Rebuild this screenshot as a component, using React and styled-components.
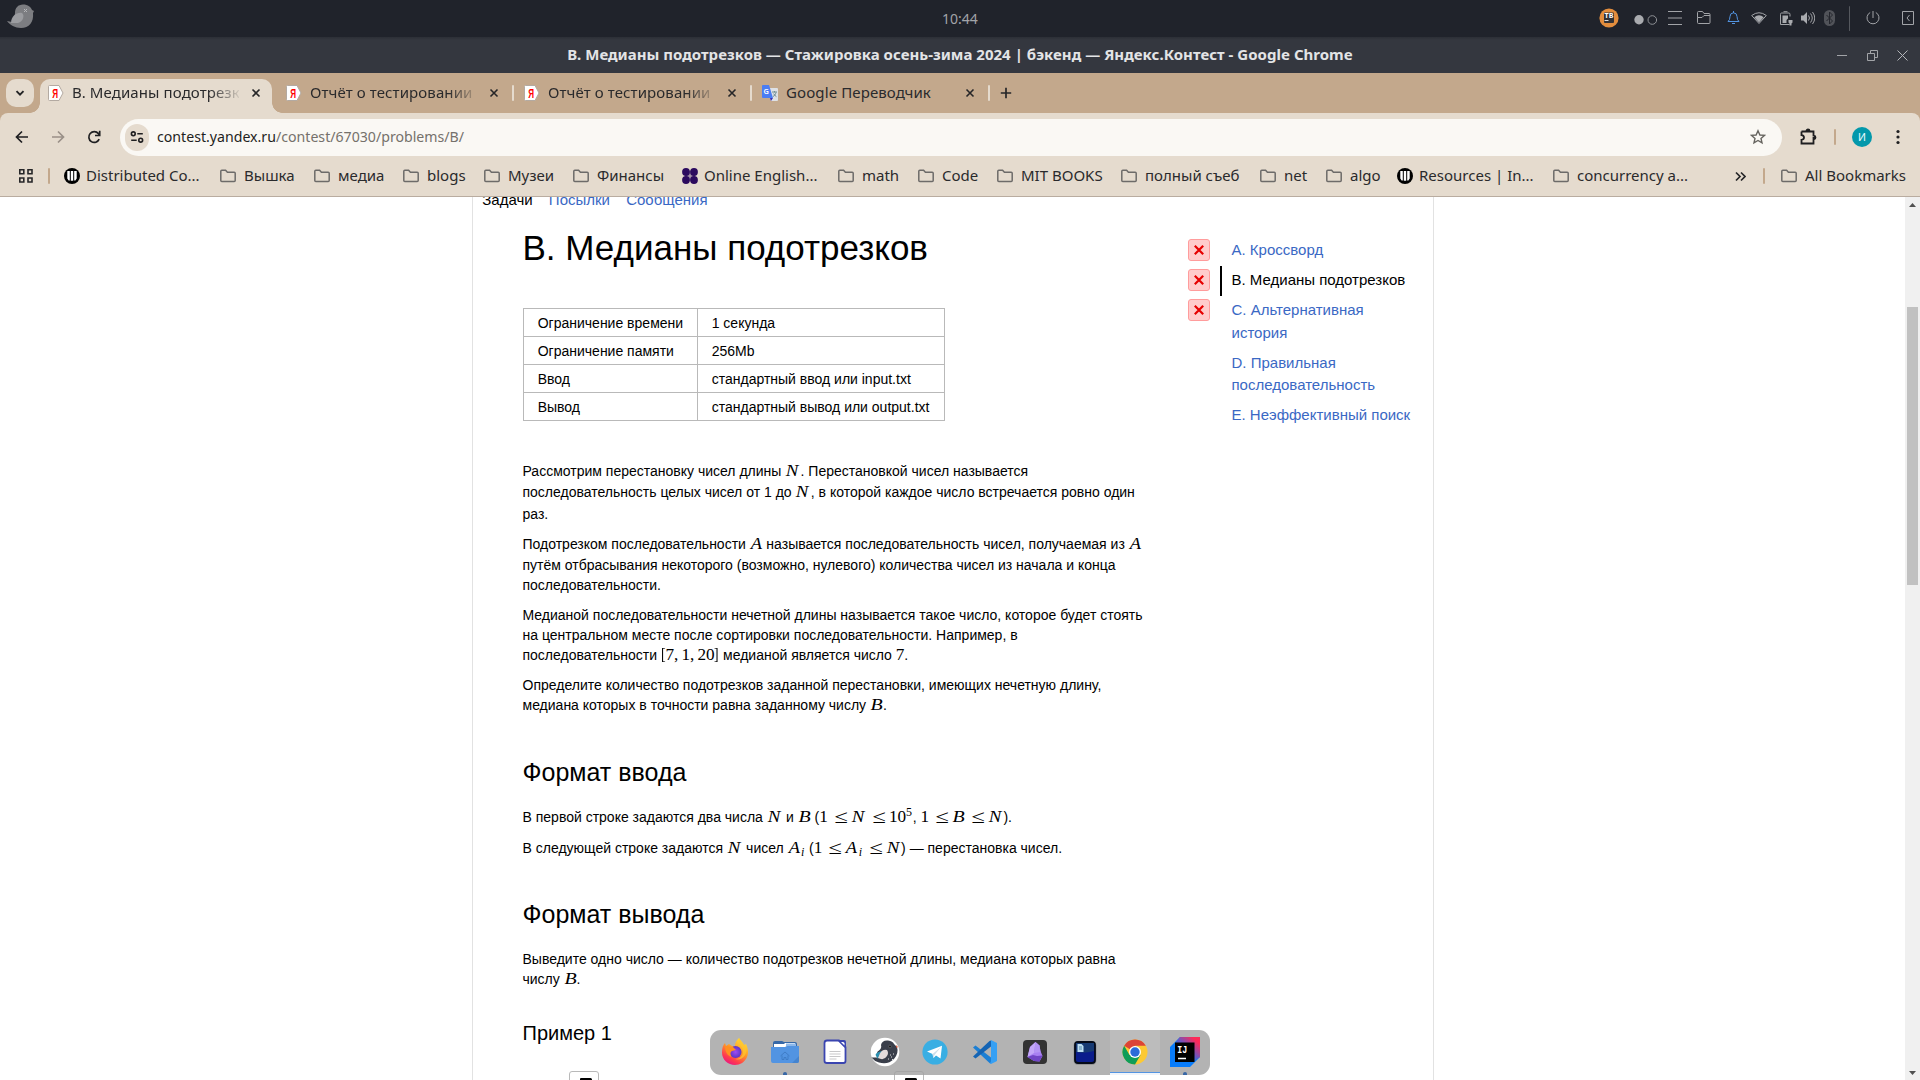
import React from 'react';
import styled, { createGlobalStyle } from 'styled-components';

const GlobalStyle = createGlobalStyle`
  * { box-sizing: border-box; }
  body { margin: 0; background: #fff; overflow: hidden; }
`;

const ui = `"Noto Sans", "Open Sans", sans-serif`;
const web = `"Liberation Sans", Arial, sans-serif`;
const serif = `"Liberation Serif", "Times New Roman", serif`;

const Desktop = styled.div`
  width: 1920px;
  height: 1080px;
  display: flex;
  flex-direction: column;
  overflow: hidden;
  position: relative;
  font-family: ${ui};
  font-size: 15px;
  color: #2a2a2c;
  svg { display: block; flex: none; }
`;

/* ---------- system panel ---------- */
const Panel = styled.header`
  height: 37px;
  flex: none;
  display: grid;
  grid-template-columns: 1fr 240px 1fr;
  background: #20232b;
  color: #a2a4a8;
`;
const PanelLeft = styled.div`padding: 4px 0 0 6px;`;
const Clock = styled.div`
  font-size: 14px;
  line-height: 37px;
  text-align: center;
`;
const Tray = styled.div`
  display: flex;
  align-items: center;
  justify-self: end;
  width: 330px;
  height: 36px;
  overflow: hidden;
`;
const Slot = styled.div`
  width: ${(p) => p.$w}px;
  flex: none;
  display: flex;
  justify-content: center;
  align-items: center;
`;
const Rule = styled.div`
  width: ${(p) => p.$w || 2}px;
  height: ${(p) => p.$h || 16}px;
  background: ${(p) => p.$c || '#c3a88c'};
  border-radius: 1px;
  flex: none;
`;

/* ---------- window title ---------- */
const TitleBar = styled.div`
  height: 36px;
  flex: none;
  display: grid;
  grid-template-columns: 240px 1fr 240px;
  align-items: center;
  background: linear-gradient(#2c2f36, #34373f 3px);
  color: #e3e4e6;
`;
const WindowTitle = styled.div`
  grid-column: 2;
  padding-bottom: 2px;
  text-align: center;
  font-weight: 700;
  line-height: 20px;
  letter-spacing: 0.02px;
  white-space: nowrap;
`;
const WindowButtons = styled.div`
  display: flex;
  justify-content: flex-end;
  padding-right: 3px;
`;

/* ---------- tabs ---------- */
const TabStrip = styled.div`
  height: 40px;
  flex: none;
  display: flex;
  padding: 6px 0 0 6px;
  background: #c3a88c;
`;
const TabSearch = styled.div`
  width: 28px;
  height: 28px;
  margin-right: 6px;
  border-radius: 10px;
  background: #e5dbce;
  display: flex;
  align-items: center;
  justify-content: center;
`;
const TabCell = styled.div`
  width: 238px;
  height: 34px;
  flex: none;
  display: flex;
`;
const Tab = styled.div`
  width: 232px;
  height: 34px;
  padding: 0 8px 6px;
  display: flex;
  align-items: center;
  position: relative;
  border-radius: 10px 10px 0 0;
  background: ${(p) => (p.$active ? '#e5dbce' : 'transparent')};
  &::before, &::after {
    content: '';
    display: ${(p) => (p.$active ? 'block' : 'none')};
    position: absolute;
    bottom: 0;
    width: 10px;
    height: 10px;
  }
  &::before { left: -10px; background: radial-gradient(circle at 0 0, transparent 9.5px, #e5dbce 10px); }
  &::after { right: -10px; background: radial-gradient(circle at 100% 0, transparent 9.5px, #e5dbce 10px); }
`;
const TabTitle = styled.div`
  width: 167px;
  margin: 0 9px 0 8px;
  padding-bottom: 2px;
  line-height: 26px;
  letter-spacing: 0.1px;
  overflow: hidden;
  white-space: nowrap;
  mask-image: ${(p) => (p.$fade ? 'linear-gradient(90deg, #000 138px, transparent 170px)' : 'none')};
`;
const TabRule = styled(Rule)`margin: 6px 2px 0;`;
const NewTab = styled.div`
  width: 28px;
  height: 28px;
  display: flex;
  align-items: center;
  justify-content: center;
`;

/* ---------- toolbar ---------- */
const ToolbarBack = styled.div`flex: none; background: #c3a88c;`;
const Toolbar = styled.div`
  height: 48px;
  display: flex;
  align-items: center;
  padding-left: 4px;
  border-radius: 8px 8px 0 0;
  background: #e5dbce;
`;
const Omnibox = styled.div`
  width: 1662px;
  height: 37px;
  margin-left: 8px;
  border-radius: 19px;
  background: #faf8f4;
  display: flex;
  align-items: center;
  padding: 0 16px 0 5px;
`;
const SiteInfo = styled.div`
  width: 24px;
  height: 27px;
  border-radius: 12px;
  background: #e5dbce;
  display: flex;
  align-items: center;
  justify-content: center;
`;
const Url = styled.div`
  flex: 1;
  margin-left: 8px;
  padding-bottom: 1px;
  font-size: 14.15px;
  line-height: 20px;
  color: #75716b;
  b { font-weight: 400; color: #1f1f21; }
`;
const Avatar = styled.div`
  width: 20px;
  height: 20px;
  border-radius: 50%;
  background: #0398ab;
  color: #e8fbfd;
  font-size: 10.5px;
  line-height: 20px;
  text-align: center;
`;

/* ---------- bookmarks ---------- */
const Bookmarks = styled.div`
  height: 36px;
  flex: none;
  display: flex;
  align-items: center;
  padding: 0 0 5px 18px;
  background: #e5dbce;
  border-bottom: 1px solid #b9aca0;
`;
const Bookmark = styled.div`
  width: ${(p) => p.$w}px;
  flex: none;
  display: flex;
  align-items: center;
  gap: ${(p) => p.$gap || 8}px;
`;
const BookmarkName = styled.span`
  padding-bottom: 2px;
  line-height: 20px;
  white-space: nowrap;
`;

/* ---------- page ---------- */
const Viewport = styled.main`
  flex: 1;
  min-height: 0;
  display: flex;
  padding-left: 472px;
  overflow: hidden;
  background: #fff;
  font-family: ${web};
  color: #000;
`;
const Sheet = styled.div`
  width: 962px;
  margin-right: 471px;
  flex: none;
  border: solid #e2e2e2;
  border-width: 0 1px;
`;
const Menu = styled.nav`
  display: flex;
  gap: 16.2px;
  margin: -7px 0 16px;
  padding-left: 9.3px;
  font-size: 15px;
  line-height: 20px;
  white-space: nowrap;
`;
const Link = styled.span`color: ${(p) => (p.$current ? '#000' : '#3a68c4')};`;
const Columns = styled.div`
  display: flex;
  padding-left: 49.5px;
`;
const Problem = styled.article`
  width: 665px;
  font-size: 14px;
  line-height: 20px;
  white-space: nowrap;
`;
const Title = styled.h1`
  margin: 0 0 38px;
  font-size: 35px;
  font-weight: 400;
  line-height: 44px;
`;
const Limits = styled.div`
  width: 422px;
  display: grid;
  grid-template-columns: 173px 246px;
  gap: 1px;
  padding: 1px;
  margin-bottom: 40px;
  background: #b9b9b9;
`;
const Limit = styled.div`
  height: 27px;
  padding-left: 14.2px;
  line-height: 28px;
  background: #fff;
`;
const Para = styled.div`margin-bottom: ${(p) => p.$mb ?? 10}px;`;
const Line = styled.div`height: ${(p) => p.$h || 20}px;`;
const Section = styled.h2`
  margin: ${(p) => p.$mt}px 0 20px;
  font-size: 25px;
  font-weight: 400;
  line-height: 30px;
`;
const Example = styled.h3`
  margin: 32px 0 26px;
  font-size: 20px;
  font-weight: 400;
  line-height: 24px;
`;
const CopyRow = styled.div`
  display: flex;
  gap: 295px;
  padding-left: 46px;
`;
const CopyButton = styled.div`
  width: 30px;
  height: 30px;
  border: 1px solid #b9b9b9;
  border-radius: 3px;
  padding: 6px 0 0 10px;
`;

/* ---------- formulas ---------- */
const Formula = styled.span`
  font-family: ${serif};
  font-size: 17.2px;
  line-height: 1px;
`;
const Sym = styled.span`
  display: inline-block;
  width: ${(p) => p.$w}px;
  font-style: ${(p) => (p.$it ? 'italic' : 'normal')};
  font-size: ${(p) => p.$fs || 17.2}px;
  margin: 0 ${(p) => p.$m || 0}px;
  transform: translate(${(p) => p.$dx || 0}px, ${(p) => p.$dy || 0}px) scaleX(${(p) => p.$k || 1});
  transform-origin: 0 50%;
`;
const N = () => <Sym $it $w={15.3} $dx={0.8} $k={1.1}>N</Sym>;
const A = () => <Sym $it $w={12.7} $dx={0.8} $k={1.07}>A</Sym>;
const B = () => <Sym $it $w={12.9} $dx={0.4} $k={1.16}>B</Sym>;
const Le = () => <Sym $w={13.1} $m={5} $fs={18.6} $dx={1.2} $dy={1} $k={1.32}>≤</Sym>;
const D = ({ children }) => <Sym $w={8.47}>{children}</Sym>;
const Sub = () => <Sym $it $w={4.8} $fs={12} $dx={0.8} $dy={3}>i</Sym>;

/* ---------- task list ---------- */
const Tasks = styled.aside`
  padding-top: 10px;
  font-size: 15px;
  line-height: 22.5px;
`;
const Task = styled.div`
  display: flex;
`;
const Verdict = styled.div`
  width: 22px;
  height: 22px;
  margin: 3px 10px 0 0;
  border: 1px solid ${(p) => (p.$failed ? '#ff9c9c' : 'transparent')};
  border-radius: 3px;
  background: ${(p) => (p.$failed ? '#fcc' : 'transparent')};
  display: flex;
  align-items: center;
  justify-content: center;
`;
const TaskName = styled.div`
  width: 200px;
  padding: 3px 0 4.5px 10px;
  border-left: 2px solid ${(p) => (p.$current ? '#000' : 'transparent')};
  color: ${(p) => (p.$current ? '#000' : '#3a68c4')};
  white-space: pre-line;
`;

/* ---------- scrollbar ---------- */
const Scrollbar = styled.div`
  width: 15px;
  flex: none;
  height: 883px;
  display: flex;
  flex-direction: column;
  align-items: center;
  padding: 6px 0 5px;
  background: #f0f0f0;
`;
const Thumb = styled.div`
  width: 11px;
  height: 278px;
  margin: 100px 0 auto;
  background: #c1c1c1;
`;

/* ---------- dock ---------- */
const Dock = styled.footer`
  position: absolute;
  left: 710px;
  top: 1030px;
  width: 500px;
  height: 45px;
  display: flex;
  border-radius: 11px;
  overflow: hidden;
  background: rgba(160, 160, 160, 0.8);
`;
const DockItem = styled.div`
  width: 50px;
  height: 45px;
  padding-top: 7px;
  display: flex;
  flex-direction: column;
  align-items: center;
  justify-content: space-between;
  background: ${(p) => (p.$focused ? 'rgba(255,255,255,0.13)' : 'transparent')};
`;
const Dot = styled.div`
  width: 4px;
  height: 3px;
  border-radius: 2px 2px 0 0;
  background: ${(p) => (p.$on ? '#3867a5' : 'transparent')};
`;
const Focus = styled.div`
  width: 50px;
  height: 3px;
  border-top: 1px solid #5294e2;
  background: #f0f4fa;
`;

/* ---------- icon drawings ---------- */
const Stroke = ({ w = 16, h = w, vb, c = '#a2a4a8', sw = 1, children }) => (
  <svg width={w} height={h} viewBox={vb || `0 0 ${w} ${h}`} fill="none" stroke={c} strokeWidth={sw}>{children}</svg>
);
const Bird = () => (
  <svg width="29" height="26" viewBox="0 0 29 26">
    <path d="M1 17 L6 18 C7 15 9 13 9 9 C9 4 12 .5 17 .5 C22 .5 25 3 26 6 L28 7 L27 9 C28 18 23 24 15 24 C9 24 4 21 1 17Z" fill="#7c7d81" />
    <path d="M5 19 C5 12 11 8 16 9 C19 11 17 18 12 19Z" fill="#9b9ca0" />
    <path d="M18 5 l3 3 M21 5 l-3 3" stroke="#b5b6b9" />
  </svg>
);
const Toolbox = () => (
  <svg width="20" height="20" viewBox="0 0 20 20">
    <circle cx="10" cy="10" r="9.6" fill="#e38d3d" />
    <rect x="5" y="4.500" width="10" height="10.500" rx="1" fill="#323236" />
    <text x="5.6" y="10" fontFamily="Noto Sans" fontWeight="700" fontSize="6.8" fill="#fff" textLength="8.8" lengthAdjust="spacingAndGlyphs">TB</text>
    <path d="M5.500 12.500h4" stroke="#ddd" />
  </svg>
);
const Yandex = () => (
  <svg width="16" height="16" viewBox="0 0 16 16">
    <path d="M1.500 .5 H11 L15 8 L11 15.500 H1.500 Q.5 15.500 .5 14.500 V1.500 Q.5 .5 1.500 .5Z" fill="#fff" stroke="#b3aaa2" />
    <text x="4.300" y="12.6" fontFamily="Liberation Sans" fontWeight="700" fontSize="13" fill="#f00" textLength="5.800" lengthAdjust="spacingAndGlyphs">Я</text>
  </svg>
);
const Translate = () => (
  <svg width="16" height="16" viewBox="0 0 16 16">
    <path d="M7 3h8q1 0 1 1v11q0 1-1 1H9z" fill="#dfe1e5" />
    <path d="M1 0h6l4 13H1q-1 0-1-1V1q0-1 1-1z" fill="#4a7df3" />
    <path d="M8 13h3l-2 3z" fill="#3b2fb5" />
    <text x="1.6" y="9.2" fontFamily="Noto Sans" fontWeight="600" fontSize="7.4" fill="#fff">G</text>
    <path d="M10 7h5M12.500 6v1.400M14 7.400c-.4 2-2 3.600-3 4.300M11.600 8.600c.7 1.300 1.800 2.400 2.800 3" stroke="#6f8e95" fill="none" />
  </svg>
);
const CloseTab = () => <Stroke w={16} c="#262628" sw={1.6}><path d="M4.500 4.500l7 7M11.500 4.500l-7 7" /></Stroke>;
const Folder = () => (
  <Stroke w={16} h={14} c="#6d6b69" sw={1.5}><path d="M.8 2.200q0-1 1-1h3.800l1.800 2h6.800q1 0 1 1v7.200q0 1-1 1H1.800q-1 0-1-1z" /></Stroke>
);
const Globe = () => (
  <svg width="16" height="16" viewBox="0 0 16 16">
    <circle cx="8" cy="8" r="8" fill="#000" />
    <path d="M3.300 3h2.500v9.500H4.600L3.300 10.500zM6.800 3h2.400v9.800H6.800zM10.200 3h2.500v7.500l-1.300 2h-1.200z" fill="#fff" />
  </svg>
);
const Quad = () => (
  <svg width="16" height="16" viewBox="0 0 16 16" fill="#2c0a5e">
    <circle cx="4" cy="4" r="3.900" /><circle cx="12" cy="4" r="3.900" /><circle cx="4" cy="12" r="3.900" /><circle cx="12" cy="12" r="3.900" /><path d="M3 3h10v10H3z" opacity=".35" />
  </svg>
);
const Cross = () => <Stroke w={12} c="#e60000" sw={2.2}><path d="M1.800 1.800l8.400 8.400M10.200 1.800l-8.400 8.400" /></Stroke>;
const CopyIcon = () => (
  <svg width="12" height="14" viewBox="0 0 12 14"><path d="M1 0h9.500q1.500 0 1.500 1.500V14H9V3H0V1q0-1 1-1z" fill="#000" /></svg>
);

const S = ({ children }) => <svg width="30" height="30" viewBox="0 0 30 30">{children}</svg>;
const Firefox = () => (
  <S>
    <defs>
      <linearGradient id="fx" x1=".8" y1="0" x2=".25" y2="1"><stop offset="0" stopColor="#ffe83c" /><stop offset=".45" stopColor="#ff9a26" /><stop offset=".8" stopColor="#ff3750" /><stop offset="1" stopColor="#e6158a" /></linearGradient>
      <radialGradient id="fp"><stop offset="0" stopColor="#a04bf2" /><stop offset="1" stopColor="#5b36c4" /></radialGradient>
    </defs>
    <path d="M19 1C20 3 23 5 24 8L26 7C28 11 29 16 27 20C25 25 20 28 15 28C8 28 2 23 2 15.500C2 11 3 8 5 6L6 9L9 7L12 9L15 9C15 5 17 3 19 1Z" fill="url(#fx)" />
    <circle cx="15.500" cy="15" r="6" fill="url(#fp)" />
    <path d="M5 9L13 10L16 13L12 14C10 15 10 18 12 20C7 19 5 14 5 9Z" fill="#ff8f20" />
    <path d="M19 1C17 8 24 9 23 16C22 21 17 22 15 22C22 24 28 18 26 9C23 8 21 4 19 1Z" fill="#ffc62e" opacity=".75" />
  </S>
);
const Files = () => (
  <S>
    <path d="M3 6q0-2 2-2h7l2 1h11q2 0 2 2v5H3z" fill="#3769a8" />
    <path d="M4 7h10l1-1h10v4H4z" fill="#fff" /><path d="M16 6.500h10v3H16z" fill="#8db8ea" />
    <path d="M1 10h14l2-1h12v15q0 2-2 2H3q-2 0-2-2z" fill="#5294e2" />
    <path d="M10.500 19l4.500-4 4.500 4M12 18.500v4h2v-2h2v2h2v-4" stroke="#3f7cc6" fill="none" />
    <path d="M29 19l-7 7h5q2 0 2-2z" fill="#4584cf" />
  </S>
);
const Writer = () => (
  <S>
    <path d="M7 3.500h12L25.500 10V24q0 2-2 2H7q-2.500 0-2.500-2V6q0-2.500 2.500-2.500z" fill="#fff" stroke="#3a45b0" strokeWidth="1.800" />
    <path d="M17 3h7q2 0 2 2v7z" fill="#3a45b0" /><path d="M21 5h2q1.500 0 1.500 1.500v2z" fill="#fff" />
    <path d="M9.500 14.500h11M9.500 17h11M9.500 19.500h11M9.500 22h7" stroke="#c7c7c9" />
  </S>
);
const BirdApp = () => (
  <S>
    <circle cx="15" cy="15" r="14.300" fill="#fff" />
    <path d="M1.500 20.500L8 20.500Q5.500 15 9 13.500Q12 11 11 8Q12 3 18 3.500Q23 4 24 7L27 10Q29 16 24 22Q18 28 9 25.500Q4 24 1.500 20.500Z" fill="#3a3f4b" />
    <path d="M12 14Q4 16 6 19L8 22Q9 17 12 14Z" fill="#2b8fb0" />
    <path d="M17 13Q11 11 8 21Q14 24 17 19Q19 16 17 13Z" fill="#e4dcdc" />
    <circle cx="20" cy="9.500" r="1.400" fill="#15171b" stroke="#777" strokeWidth=".6" /><path d="M26 8l2 2-1.500 1z" fill="#e5532d" />
    <path d="M18 22h1M21 20h1M23 17h1M20 18h1M22 22.500h1" stroke="#ddd" />
  </S>
);
const Telegram = () => (
  <S>
    <circle cx="15" cy="15" r="12.600" fill="#39aee3" />
    <path d="M7 14.500L22 8.800L20.500 21.500L16 18.500L13.500 21L12.500 17z" fill="#fff" /><path d="M12.500 17L21 10l-6.500 8L13.500 21z" fill="#cfdfea" />
  </S>
);
const Code = () => (
  <S>
    <path d="M3 10.500L5.500 8.500L21 20.500V26.500L19.500 26z" fill="#1c7fd4" />
    <path d="M3 19.500L5.500 21.500L21 9.500V3.500L19.500 4z" fill="#1464b4" />
    <path d="M21 3L27 6V24L21 27L19.500 26Q21 26 21 24z" fill="#36a0f4" />
  </S>
);
const Obsidian = () => (
  <S>
    <rect x="3" y="3" width="24" height="24" rx="4" fill="#333" />
    <path d="M15.500 5L19.500 8.500L20.500 14L22.500 19L19.500 24.500L14 24L7.500 20L10 10z" fill="#a880f2" />
    <path d="M10 10L15.500 5L14 16L7.500 20z" fill="#c4a8f8" /><path d="M7.500 20L13 18L17 19L22.500 18.500L19.500 24.500L14 24z" fill="#7146c6" />
    <path d="M15.500 5L19.500 8.500L20.500 15L14 16z" fill="#b494f4" />
  </S>
);
const Commander = () => (
  <S>
    <rect x="3.500" y="4" width="23" height="24" rx="4.500" fill="#777" opacity=".5" />
    <rect x="5" y="5" width="20" height="21" rx="3" fill="#0a1c8c" stroke="#050a18" strokeWidth="1.800" />
    <path d="M6 6h18v8Q14 17 6 15z" fill="#173a73" />
    <path d="M7.500 7h4l2 2v6h-6z" fill="#bfe0f2" /><path d="M9 10h3M9 12h3" stroke="#58a" />
  </S>
);
const Chrome = () => (
  <S>
    <circle cx="15" cy="15" r="12.500" fill="#fcc934" />
    <path d="M15 2.500A12.500 12.500 0 0 1 25.830 8.750H15L9.500 12L4.170 8.750A12.500 12.500 0 0 1 15 2.500Z" fill="#dc4437" />
    <path d="M4.170 8.750A12.500 12.500 0 0 0 15 27.500L20.500 18H9.500Z" fill="#0f9d58" />
    <circle cx="15" cy="15" r="6" fill="#fff" /><circle cx="15" cy="15" r="4.700" fill="#2b6bd8" />
  </S>
);
const Idea = () => (
  <S>
    <defs>
      <linearGradient id="ij" x1="0" y1="1" x2="1" y2="0"><stop offset=".3" stopColor="#087cfa" /><stop offset=".55" stopColor="#7b50b5" /><stop offset=".85" stopColor="#fe2857" /></linearGradient>
    </defs>
    <path d="M10 0H30V20L20 30H0V10z" fill="#087cfa" />
    <path d="M10 0H30V20L24 24V6H5z" fill="url(#ij)" />
    <rect x="5" y="5.500" width="19.500" height="19.500" fill="#000" />
    <path d="M8 21.500h8" stroke="#fff" strokeWidth="1.500" />
    <text x="7.200" y="15.500" fontFamily="Liberation Mono" fontWeight="700" fontSize="11.500" fill="#fff" textLength="10" lengthAdjust="spacingAndGlyphs">IJ</text>
  </S>
);

const TrayIcons = () => (
  <Tray>
    <Slot $w={38}><Toolbox /></Slot>
    <Slot $w={35}><svg width="24" height="14" viewBox="0 0 24 14"><circle cx="5" cy="8.700" r="4.700" fill="#a9abaf" /><circle cx="18.300" cy="9" r="4.300" fill="none" stroke="#8e9095" /></svg></Slot>
    <Slot $w={24}><Stroke w={14}><path d="M0 .5h14M0 7h14M0 13.500h14" /></Stroke></Slot>
    <Slot $w={34}><Stroke w={14}><path d="M.5 6.500v-5q0-1 1-1h4l1.500 2h5q1 0 1 1v8q0 1-1 1h-10.500q-1 0-1-1V6.500h4.500l2-2h6" /></Stroke></Slot>
    <Slot $w={24}><Stroke w={13} h={14} c="#5294e2"><path d="M1 10.500q2-1.500 2-5Q3 2 6.500 1.800 10 2 10 5.500q0 3.500 2 5zM6.500 0v2M5 12.500h3" /></Stroke></Slot>
    <Slot $w={28}><svg width="16" height="13" viewBox="0 0 16 13"><path d="M.7 3.500Q8-2 15.300 3.500L8 11.500z" fill="none" stroke="#a2a4a8" /><path d="M3.300 5.200Q8 1.500 12.700 5.200L8 10.500z" fill="#a9abaf" /></svg></Slot>
    <Slot $w={26}><Stroke w={13} h={15}><path d="M.5 3.500v10h9M.5 3.500q0-1.500 1-1.500h7.500q1 0 1 1.500v2M3.500 .7h4" /><path d="M2.500 4.500h5.500v3l-1.500 1.500v3h-4zM8.500 9h4v2.500l-1 1v2h-2v-2l-1-1z" fill="#a9abaf" stroke="none" /></Stroke></Slot>
    <Slot $w={18}><Stroke w={14}><path d="M0 4.500h2.500L6 1v12L2.500 9.500H0z" fill="#a9abaf" stroke="none" /><path d="M7.500 4.500q2 2.500 0 5M9.500 2.500q3.500 4.500 0 9M11.500 1q4.500 6 0 12" /></Stroke></Slot>
    <Slot $w={24}><svg width="11" height="16" viewBox="0 0 11 16"><rect width="11" height="16" rx="5.500" fill="#515359" /><path d="M2.500 5l6 6-3 3V2l3 3-6 6" fill="none" stroke="#24262d" /></svg></Slot>
    <Slot $w={16}><Rule $w={1} $h={25} $c="#55585e" /></Slot>
    <Slot $w={32}><Stroke w={14}><path d="M7 0v7M4.200 1.500a6 6 0 1 0 5.600 0" /></Stroke></Slot>
    <Slot $w={38}><Stroke w={13} h={14}><path d="M.5.5h11v13H.5zM7.500 4L5 7l2.500 3" /></Stroke></Slot>
  </Tray>
);

const tabs = [
  { title: 'B. Медианы подотрезков', icon: <Yandex />, active: true, fade: true },
  { title: 'Отчёт о тестировании', icon: <Yandex />, fade: true, rule: true },
  { title: 'Отчёт о тестировании', icon: <Yandex />, fade: true, rule: true },
  { title: 'Google Переводчик', icon: <Translate />, rule: true },
];
const bookmarks = [
  ['Distributed Co...', 156, 'globe'], ['Вышка', 94], ['медиа', 89], ['blogs', 81], ['Музеи', 89], ['Финансы', 109],
  ['Online English...', 156, 'quad'], ['math', 80], ['Code', 79], ['MIT BOOKS', 124], ['полный съеб', 139], ['net', 66],
  ['algo', 71], ['Resources | In...', 156, 'globe'], ['concurrency a...', 177],
];
const limits = ['Ограничение времени', '1 секунда', 'Ограничение памяти', '256Mb', 'Ввод', 'стандартный ввод или input.txt', 'Вывод', 'стандартный вывод или output.txt'];
const tasks = [
  { name: 'A. Кроссворд', failed: true },
  { name: 'B. Медианы подотрезков', failed: true, current: true },
  { name: 'C. Альтернативная\nистория', failed: true },
  { name: 'D. Правильная\nпоследовательность' },
  { name: 'E. Неэффективный поиск' },
];
const apps = [
  { icon: <Firefox /> }, { icon: <Files />, running: true }, { icon: <Writer /> }, { icon: <BirdApp /> }, { icon: <Telegram /> },
  { icon: <Code /> }, { icon: <Obsidian /> }, { icon: <Commander /> }, { icon: <Chrome />, focused: true }, { icon: <Idea />, running: true },
];
const bookmarkIcon = { globe: <Globe />, quad: <Quad /> };

export default function App() {
  return (
    <Desktop>
      <GlobalStyle />
      <Panel>
        <PanelLeft><Bird /></PanelLeft>
        <Clock>10:44</Clock>
        <TrayIcons />
      </Panel>

      <TitleBar>
        <WindowTitle>B. Медианы подотрезков — Стажировка осень-зима 2024 | бэкенд — Яндекс.Контест - Google Chrome</WindowTitle>
        <WindowButtons>
          <Slot $w={30}><Stroke w={10}><path d="M0 5.500h10" /></Stroke></Slot>
          <Slot $w={30}><Stroke w={11}><path d="M.5 3.500h7v7h-7zM3.500 3.500v-3h7v7h-3" /></Stroke></Slot>
          <Slot $w={30}><Stroke w={11} c="#b4b6ba"><path d="M.5.5l10 10M10.500.5l-10 10" /></Stroke></Slot>
        </WindowButtons>
      </TitleBar>

      <TabStrip>
        <TabSearch><Stroke w={10} c="#232325" sw={1.9}><path d="M1.500 3.200L5 6.700l3.500-3.500" /></Stroke></TabSearch>
        {tabs.map((t, i) => (
          <TabCell key={i}>
            <Tab $active={t.active}>
              {t.icon}
              <TabTitle $fade={t.fade}>{t.title}</TabTitle>
              <CloseTab />
            </Tab>
            {t.rule && <TabRule $c="#e5dbce" />}
          </TabCell>
        ))}
        <NewTab><Stroke w={12} c="#262628" sw={1.7}><path d="M6 .8v10.400M.8 6h10.400" /></Stroke></NewTab>
      </TabStrip>

      <ToolbarBack>
        <Toolbar>
          <Slot $w={36}><Stroke w={14} c="#1f1f21" sw={1.7}><path d="M13 7H2M7 1.500L1.500 7 7 12.500" /></Stroke></Slot>
          <Slot $w={36}><Stroke w={14} c="#9a9088" sw={1.7}><path d="M1 7h11M7 1.500L12.500 7 7 12.500" /></Stroke></Slot>
          <Slot $w={36}><Stroke w={14} c="#1f1f21" sw={1.7}><path d="M12.200 9.200A5.400 5.400 0 1 1 11.400 3.600L12.400 5M12.700 .8v4.700H8" /></Stroke></Slot>
          <Omnibox>
            <SiteInfo><Stroke w={14} c="#1f1f21" sw={1.6}><circle cx="3.300" cy="3.800" r="1.900" /><path d="M7.300 3.800h5.500M1.200 10.200h5.500" /><circle cx="10.700" cy="10.200" r="1.900" /></Stroke></SiteInfo>
            <Url><b>contest.yandex.ru</b>/contest/67030/problems/B/</Url>
            <Stroke w={16} c="#66645f" sw={1.4}><path d="M8 1.800l1.900 4.200 4.500.4-3.400 3 1 4.500L8 11.500l-4 2.400 1-4.500-3.400-3 4.500-.4z" /></Stroke>
          </Omnibox>
          <Slot $w={52}><Stroke w={18} c="#1f1f21" sw={1.8}><path d="M2.500 3.500h12v5M14.500 9v6.500h-12v-3.700q2.500-.3 2.500-2.300t-2.500-2.300V3.500" /><path d="M7.500 3a1.500 1.500 0 0 1 3 0M15 8a1.500 1.500 0 0 1 0 3" fill="#1f1f21" /></Stroke></Slot>
          <Rule />
          <Slot $w={52}><Avatar>И</Avatar></Slot>
          <Slot $w={20}><svg width="4" height="16" viewBox="0 0 4 16" fill="#1f1f21"><circle cx="2" cy="2.500" r="1.600" /><circle cx="2" cy="8" r="1.600" /><circle cx="2" cy="13.500" r="1.600" /></svg></Slot>
        </Toolbar>
      </ToolbarBack>

      <Bookmarks>
        <Stroke w={16} c="#262628" sw={1.6}><path d="M1.800 1.800h4v4h-4zM10 1.800h4v4h-4zM1.800 10h4v4h-4zM10 10h4v4h-4z" /></Stroke>
        <Slot $w={30}><Rule /></Slot>
        {bookmarks.map(([name, w, icon]) => (
          <Bookmark key={name} $w={w} $gap={icon ? 6 : 8}>{bookmarkIcon[icon] || <Folder />}<BookmarkName>{name}</BookmarkName></Bookmark>
        ))}
        <Slot $w={20}><Stroke w={11} c="#262628" sw={1.7}><path d="M1 1.500l4 4-4 4M6 1.500l4 4-4 4" /></Stroke></Slot>
        <Slot $w={27}><Rule /></Slot>
        <Slot $w={4} />
        <Bookmark $w={130}><Folder /><BookmarkName>All Bookmarks</BookmarkName></Bookmark>
      </Bookmarks>

      <Viewport>
        <Sheet>
          <Menu><Link $current>Задачи</Link><Link>Посылки</Link><Link>Сообщения</Link></Menu>
          <Columns>
            <Problem>
              <Title>B. Медианы подотрезков</Title>
              <Limits>{limits.map((l) => <Limit key={l}>{l}</Limit>)}</Limits>
              <Para>
                <Line $h={21}>Рассмотрим перестановку чисел длины <Formula><N /></Formula>. Перестановкой чисел называется</Line>
                <Line $h={22}>последовательность целых чисел от 1 до <Formula><N /></Formula>, в которой каждое число встречается ровно один</Line>
                <Line>раз.</Line>
              </Para>
              <Para>
                <Line $h={21}>Подотрезком последовательности <Formula><A /></Formula> называется последовательность чисел, получаемая из <Formula><A /></Formula></Line>
                <Line>путём отбрасывания некоторого (возможно, нулевого) количества чисел из начала и конца</Line>
                <Line>последовательности.</Line>
              </Para>
              <Para>
                <Line>Медианой последовательности нечетной длины называется такое число, которое будет стоять</Line>
                <Line>на центральном месте после сортировки последовательности. Например, в</Line>
                <Line>последовательности <Formula><Sym $w={4.7} $k={0.8}>[</Sym><D>7</D><Sym $w={7.5}>,</Sym><D>1</D><Sym $w={7.5}>,</Sym><D>2</D><D>0</D><Sym $w={4.7} $k={0.8}>]</Sym></Formula> медианой является число <Formula><D>7</D></Formula>.</Line>
              </Para>
              <Para $mb={0}>
                <Line>Определите количество подотрезков заданной перестановки, имеющих нечетную длину,</Line>
                <Line>медиана которых в точности равна заданному числу <Formula><B /></Formula>.</Line>
              </Para>
              <Section $mt={42}>Формат ввода</Section>
              <Para $mb={11}>
                <Line>В первой строке задаются два числа <Formula><N /></Formula> и <Formula><B /></Formula> (<Formula><D>1</D><Le /><N /><Le /><D>1</D><D>0</D><Sym $w={6.8} $fs={12} $dy={-6}>5</Sym></Formula>, <Formula><D>1</D><Le /><B /><Le /><N /></Formula>).</Line>
              </Para>
              <Para $mb={0}>
                <Line>В следующей строке задаются <Formula><N /></Formula> чисел <Formula><A /><Sub /></Formula> (<Formula><D>1</D><Le /><A /><Sub /><Le /><N /></Formula>) — перестановка чисел.</Line>
              </Para>
              <Section $mt={41}>Формат вывода</Section>
              <Para $mb={0}>
                <Line>Выведите одно число — количество подотрезков нечетной длины, медиана которых равна</Line>
                <Line>числу <Formula><B /></Formula>.</Line>
              </Para>
              <Example>Пример 1</Example>
              <CopyRow>
                <CopyButton><CopyIcon /></CopyButton>
                <CopyButton><CopyIcon /></CopyButton>
              </CopyRow>
            </Problem>
            <Tasks>
              {tasks.map((t) => (
                <Task key={t.name}>
                  <Verdict $failed={t.failed}>{t.failed && <Cross />}</Verdict>
                  <TaskName $current={t.current}>{t.name}</TaskName>
                </Task>
              ))}
            </Tasks>
          </Columns>
        </Sheet>
        <Scrollbar>
          <svg width="7" height="4" viewBox="0 0 7 4"><path d="M0 4L3.500 0 7 4z" fill="#505050" /></svg>
          <Thumb />
          <svg width="7" height="4" viewBox="0 0 7 4"><path d="M0 0L3.500 4 7 0z" fill="#505050" /></svg>
        </Scrollbar>
      </Viewport>

      <Dock>
        {apps.map((a, i) => (
          <DockItem key={i} $focused={a.focused}>
            {a.icon}
            {a.focused ? <Focus /> : <Dot $on={a.running} />}
          </DockItem>
        ))}
      </Dock>
    </Desktop>
  );
}
